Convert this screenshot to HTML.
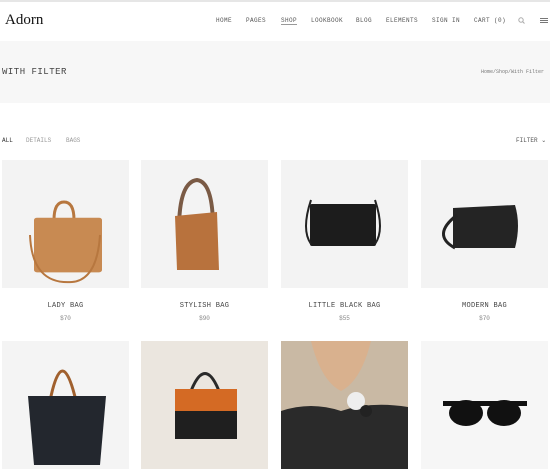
<!DOCTYPE html>
<html><head><style>
*{margin:0;padding:0;box-sizing:border-box}
body{width:550px;height:465px;overflow:hidden;background:#fff;font-family:"Liberation Mono",monospace;color:#333;position:relative}
.a{position:absolute;white-space:nowrap}
.nav span{position:absolute;top:17px;font-size:6px;letter-spacing:.4px;color:#555;white-space:nowrap}
.t{position:absolute;width:127px;height:128px;background:#f3f3f3}
.n{position:absolute;width:127px;text-align:center;font-size:7px;color:#444;letter-spacing:.3px}
.p{position:absolute;width:127px;text-align:center;font-size:6px;color:#888}
</style></head><body>
<div class="a" style="left:0;top:0;width:550px;height:2px;background:#e6e6e6"></div>
<div class="a" style="left:5px;top:12px;font-family:'Liberation Serif',serif;font-size:15px;color:#111">Adorn</div>
<div class="nav">
<span style="left:216px">HOME</span><span style="left:246px">PAGES</span>
<span style="left:281px;border-bottom:1px solid #999">SHOP</span><span style="left:311px">LOOKBOOK</span>
<span style="left:356px">BLOG</span><span style="left:386px">ELEMENTS</span>
<span style="left:432px">SIGN IN</span><span style="left:474px">CART (0)</span>
</div>
<svg class="a" style="left:518px;top:17px" width="7" height="7"><circle cx="3" cy="3" r="2.2" stroke="#aaa" fill="none"/><path d="M4.6 4.6L6.5 6.5" stroke="#aaa"/></svg>
<div class="a" style="left:540px;top:18px;width:8px;height:5px;border-top:1px solid #777;border-bottom:1px solid #777"></div>
<div class="a" style="left:540px;top:20px;width:8px;height:1px;background:#777"></div>
<div class="a" style="left:0;top:41px;width:550px;height:62px;background:#f7f7f7"></div>
<div class="a" style="left:2px;top:67px;font-size:9px;letter-spacing:.5px;color:#444">WITH FILTER</div>
<div class="a" style="left:481px;top:69px;font-size:5px;color:#777">Home/Shop/With Filter</div>
<div class="a" style="left:2px;top:137px;font-size:6px;color:#333">ALL</div>
<div class="a" style="left:26px;top:137px;font-size:6px;color:#999">DETAILS</div>
<div class="a" style="left:66px;top:137px;font-size:6px;color:#999">BAGS</div>
<div class="a" style="left:516px;top:137px;font-size:6px;color:#555">FILTER &#8964;</div>

<div class="t" style="left:2px;top:160px"><svg width="127" height="128"><path d="M52 60 Q52 42 62 42 Q72 42 72 60" stroke="#b7773f" stroke-width="3" fill="none"/><rect x="32" y="56" width="68" height="70" rx="3" fill="#c88a52" transform="scale(1,0.78) translate(0,18)"/><path d="M28 75 Q30 125 70 122 Q95 120 98 75" stroke="#b7773f" stroke-width="2" fill="none"/></svg></div>
<div class="t" style="left:141px;top:160px"><svg width="127" height="128"><path d="M38 70 Q38 22 56 20 Q72 22 72 68" stroke="#7a5a45" stroke-width="4" fill="none"/><path d="M34 56 L76 52 L78 110 L36 110 Z" fill="#b8723d"/></svg></div>
<div class="t" style="left:281px;top:160px"><svg width="127" height="128"><rect x="29" y="44" width="66" height="42" rx="2" fill="#1c1c1c"/><path d="M30 40 Q20 70 30 84 M94 40 Q104 70 94 84" stroke="#222" stroke-width="2" fill="none"/></svg></div>
<div class="t" style="left:421px;top:160px"><svg width="127" height="128"><path d="M32 48 L94 45 Q100 65 94 88 L32 88 Z" fill="#242424"/><path d="M36 55 Q10 75 34 88" stroke="#222" stroke-width="3" fill="none"/></svg></div>

<div class="n" style="left:2px;top:302px">LADY BAG</div><div class="p" style="left:2px;top:315px">$70</div>
<div class="n" style="left:141px;top:302px">STYLISH BAG</div><div class="p" style="left:141px;top:315px">$90</div>
<div class="n" style="left:281px;top:302px">LITTLE BLACK BAG</div><div class="p" style="left:281px;top:315px">$55</div>
<div class="n" style="left:421px;top:302px">MODERN BAG</div><div class="p" style="left:421px;top:315px">$70</div>

<div class="t" style="left:2px;top:341px;background:#f4f4f4"><svg width="127" height="128"><path d="M48 60 Q60 0 74 60" stroke="#a0602e" stroke-width="3" fill="none"/><path d="M26 55 L104 55 L98 124 L32 124 Z" fill="#23272e"/></svg></div>
<div class="t" style="left:141px;top:341px;background:#ebe6df"><svg width="127" height="128"><path d="M50 50 Q64 15 78 50" stroke="#2a2a2a" stroke-width="3" fill="none"/><rect x="34" y="48" width="62" height="22" fill="#d46a24"/><rect x="34" y="70" width="62" height="28" fill="#1f1f1f"/></svg></div>
<div class="t" style="left:281px;top:341px;background:#c9b9a4"><svg width="127" height="128"><path d="M0 70 Q30 60 60 70 Q90 60 127 66 L127 128 L0 128Z" fill="#2a2a2a"/><path d="M30 0 Q40 40 60 50 Q80 40 90 0Z" fill="#d9b18e"/><circle cx="75" cy="60" r="9" fill="#eee"/><circle cx="85" cy="70" r="6" fill="#222"/></svg></div>
<div class="t" style="left:421px;top:341px;background:#f6f6f6"><svg width="127" height="128"><ellipse cx="45" cy="72" rx="17" ry="13" fill="#111"/><ellipse cx="83" cy="72" rx="17" ry="13" fill="#111"/><rect x="22" y="60" width="84" height="5" fill="#111"/></svg></div>
</body></html>
